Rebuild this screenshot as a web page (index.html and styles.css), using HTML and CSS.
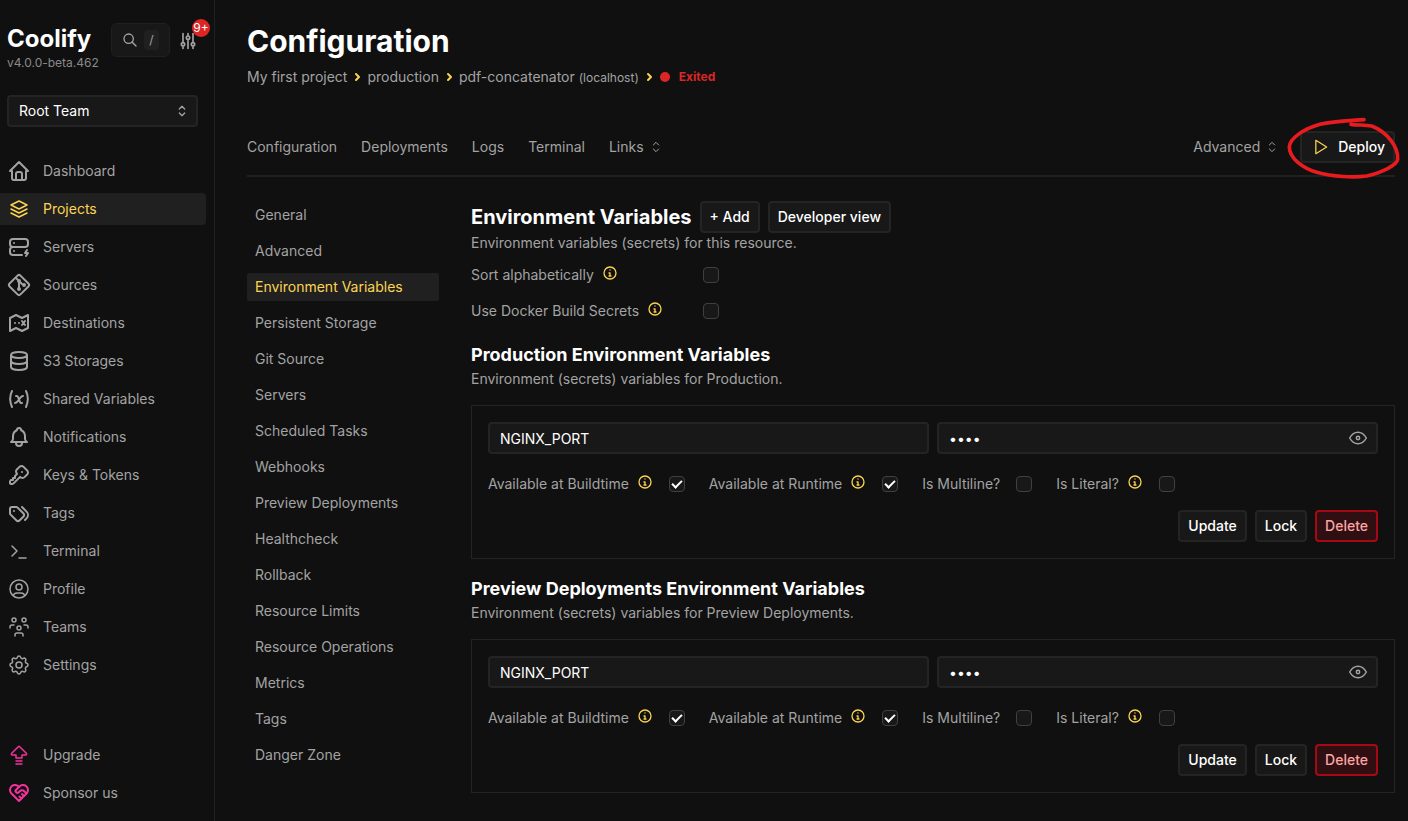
FILE: index.html
```html
<!DOCTYPE html>
<html lang="en">
<head>
  <meta charset="utf-8" />
  <meta name="viewport" content="width=device-width, initial-scale=1" />
  <title>Configuration | Coolify</title>
  <link rel="stylesheet" href="styles.css">
</head>
<body>
  <!-- shared icons -->
  <svg class="sprite" aria-hidden="true">
    <symbol id="updown" viewBox="0 0 24 24"><path d="M8 9l4-4l4 4M16 15l-4 4l-4-4"/></symbol>
    <symbol id="chevron" viewBox="0 0 12 12"><path d="M5 3l3 3l-3 3"/></symbol>
    <symbol id="info" viewBox="0 0 16 16"><circle cx="8" cy="8" r="6"/><path d="M7 8h1v3M7 11h2"/><path d="M8 5v.1"/></symbol>
    <symbol id="eye" viewBox="0 0 24 24"><circle cx="12" cy="12" r="2"/><path d="M22 12c-2.667 4.667-6 7-10 7s-7.333-2.333-10-7c2.667-4.667 6-7 10-7s7.333 2.333 10 7"/></symbol>
  </svg>

  <aside class="sidebar">
    <div class="brand-row">
      <div class="brand">
        <a href="#" class="brand-name">Coolify</a>
        <span class="version">v4.0.0-beta.462</span>
      </div>
      <button class="search" type="button" aria-label="Search">
        <svg class="icon search-icon" viewBox="0 0 24 24"><circle cx="10" cy="10" r="7"/><path d="M21 21l-6-6"/></svg>
        <kbd>/</kbd>
      </button>
      <button class="tuner" type="button" aria-label="What's new">
        <svg class="icon tuner-icon" viewBox="0 0 24 24"><path d="M4 16a2 2 0 1 0 4 0a2 2 0 1 0-4 0M6 3v11M6 18v3M10 8a2 2 0 1 0 4 0a2 2 0 1 0-4 0M12 3v3M12 10v11M16 16a2 2 0 1 0 4 0a2 2 0 1 0-4 0M18 3v11M18 18v3"/></svg>
        <span class="badge">9+</span>
      </button>
    </div>

    <div class="team">
      <select aria-label="Team">
        <option>Root Team</option>
      </select>
      <svg class="icon team-arrow"><use href="#updown"/></svg>
    </div>

    <nav class="menu">
      <a href="#" class="menu-item"><svg class="icon" viewBox="0 0 24 24"><path d="M5 12H3l9-9l9 9h-2M5 12v7a2 2 0 0 0 2 2h10a2 2 0 0 0 2-2v-7M9 21v-6a2 2 0 0 1 2-2h2a2 2 0 0 1 2 2v6"/></svg>Dashboard</a>
      <a href="#" class="menu-item active"><svg class="icon thin" viewBox="0 0 24 24"><path d="M12 4l-8 4l8 4l8-4zM4 12l8 4l8-4M4 16l8 4l8-4"/></svg>Projects</a>
      <a href="#" class="menu-item"><svg class="icon" viewBox="0 0 24 24"><path d="M3 7a3 3 0 0 1 3-3h12a3 3 0 0 1 3 3v2a3 3 0 0 1-3 3H6a3 3 0 0 1-3-3zM15 20H6a3 3 0 0 1-3-3v-2a3 3 0 0 1 3-3h12M7 8v.01M7 16v.01M20 15l-2 3h3l-2 3"/></svg>Servers</a>
      <a href="#" class="menu-item"><svg class="icon" viewBox="0 0 24 24"><path d="M16 12a1 1 0 1 0 2 0a1 1 0 1 0-2 0M11 8a1 1 0 1 0 2 0a1 1 0 1 0-2 0M11 16a1 1 0 1 0 2 0a1 1 0 1 0-2 0M12 15V9M15 11l-2-2M11 7L9.1 5.1"/><path d="M13.446 2.6l7.955 7.954a2.045 2.045 0 0 1 0 2.892l-7.955 7.955a2.045 2.045 0 0 1-2.892 0l-7.955-7.955a2.045 2.045 0 0 1 0-2.892l7.955-7.955a2.045 2.045 0 0 1 2.892 0z"/></svg>Sources</a>
      <a href="#" class="menu-item"><svg class="icon" viewBox="0 0 24 24"><path d="M3 7l6-3l6 3l6-3v13l-6 3l-6-3l-6 3zM8 12v.01M12 12v.01M15 10l3 4M18 10l-3 4"/></svg>Destinations</a>
      <a href="#" class="menu-item"><svg class="icon" viewBox="0 0 24 24"><path d="M4 6a8 3 0 1 0 16 0a8 3 0 1 0-16 0M4 6v6a8 3 0 0 0 16 0V6M4 12v6a8 3 0 0 0 16 0v-6"/></svg>S3 Storages</a>
      <a href="#" class="menu-item"><svg class="icon" viewBox="0 0 24 24"><path d="M5 4C2.5 9 2.5 14 5 20M19 4c2.500 5 2.500 10 0 16M9 9h1c1 0 1 1 2.016 3.527C13 15 13 16 14 16h1M8 16c1.500 0 3-2 4-3.500S14.500 9 16 9"/></svg>Shared Variables</a>
      <a href="#" class="menu-item"><svg class="icon" viewBox="0 0 24 24"><path d="M10 5a2 2 0 1 1 4 0a7 7 0 0 1 4 6v3a4 4 0 0 0 2 3H4a4 4 0 0 0 2-3v-3a7 7 0 0 1 4-6M9 17v1a3 3 0 0 0 6 0v-1"/></svg>Notifications</a>
      <a href="#" class="menu-item"><svg class="icon" viewBox="0 0 24 24"><path d="M16.555 3.843l3.602 3.602a2.877 2.877 0 0 1 0 4.069l-2.643 2.643a2.877 2.877 0 0 1-4.069 0l-.301-.301l-6.558 6.558a2 2 0 0 1-1.239.578L5.172 21H4a1 1 0 0 1-.993-.883L3 20v-1.172a2 2 0 0 1 .467-1.284l.119-.13L4 17h2v-2h2v-2l2.144-2.144l-.301-.301a2.877 2.877 0 0 1 0-4.069l2.643-2.643a2.877 2.877 0 0 1 4.069 0M15 9h.01"/></svg>Keys &amp; Tokens</a>
      <a href="#" class="menu-item"><svg class="icon" viewBox="0 0 24 24"><path d="M3 8v4.172a2 2 0 0 0 .586 1.414l5.710 5.710a2.410 2.410 0 0 0 3.408 0l3.592-3.592a2.410 2.410 0 0 0 0-3.408l-5.710-5.710A2 2 0 0 0 9.172 6H5a2 2 0 0 0-2 2M18 19l1.592-1.592a4.820 4.820 0 0 0 0-6.816L15 6M7 10h-.01"/></svg>Tags</a>
      <a href="#" class="menu-item"><svg class="icon thin" viewBox="0 0 24 24"><path d="M5 7l5 5l-5 5M12 19h7"/></svg>Terminal</a>
      <a href="#" class="menu-item"><svg class="icon thin" viewBox="0 0 24 24"><path d="M3 12a9 9 0 1 0 18 0a9 9 0 1 0-18 0M9 10a3 3 0 1 0 6 0a3 3 0 1 0-6 0M6.168 18.849A4 4 0 0 1 10 16h4a4 4 0 0 1 3.834 2.855"/></svg>Profile</a>
      <a href="#" class="menu-item"><svg class="icon thin" viewBox="0 0 24 24"><path d="M10 13a2 2 0 1 0 4 0a2 2 0 0 0-4 0M8 21v-1a2 2 0 0 1 2-2h4a2 2 0 0 1 2 2v1M15 5a2 2 0 1 0 4 0a2 2 0 0 0-4 0M17 10h2a2 2 0 0 1 2 2v1M5 5a2 2 0 1 0 4 0a2 2 0 0 0-4 0M3 13v-1a2 2 0 0 1 2-2h2"/></svg>Teams</a>
      <a href="#" class="menu-item"><svg class="icon thin" viewBox="0 0 24 24"><path d="M10.325 4.317c.426-1.756 2.924-1.756 3.350 0a1.724 1.724 0 0 0 2.573 1.066c1.543-.94 3.310.826 2.370 2.370a1.724 1.724 0 0 0 1.065 2.572c1.756.426 1.756 2.924 0 3.350a1.724 1.724 0 0 0-1.066 2.573c.94 1.543-.826 3.310-2.370 2.370a1.724 1.724 0 0 0-2.572 1.065c-.426 1.756-2.924 1.756-3.350 0a1.724 1.724 0 0 0-2.573-1.066c-1.543.94-3.310-.826-2.370-2.370a1.724 1.724 0 0 0-1.065-2.572c-1.756-.426-1.756-2.924 0-3.350a1.724 1.724 0 0 0 1.066-2.573c-.94-1.543.826-3.310 2.370-2.370c1 .608 2.296.07 2.572-1.065"/><circle cx="12" cy="12" r="3"/></svg>Settings</a>
    </nav>

    <div class="menu menu-bottom">
      <a href="#" class="menu-item"><svg class="icon pink thin" viewBox="0 0 24 24"><path d="M9 12H5.414a1 1 0 0 1-.707-1.707l6.586-6.586a1 1 0 0 1 1.414 0l6.586 6.586A1 1 0 0 1 18.586 12H15v3H9zM9 21h6M9 18h6"/></svg>Upgrade</a>
      <a href="#" class="menu-item"><svg class="icon pink" viewBox="0 0 24 24"><path d="M19.500 12.572L12 20l-7.500-7.428A5 5 0 1 1 12 6.006a5 5 0 1 1 7.500 6.572"/><path d="M12 6L8.707 9.293a1 1 0 0 0 0 1.414l.543.543c.69.69 1.810.69 2.500 0l1-1a3.182 3.182 0 0 1 4.500 0l2.250 2.250M12.500 15.500l2 2M15 13l2 2"/></svg>Sponsor us</a>
    </div>
  </aside>

  <main class="main">
    <h1>Configuration</h1>
    <div class="breadcrumb">
      <a href="#">My first project</a>
      <svg class="icon crumb"><use href="#chevron"/></svg>
      <a href="#">production</a>
      <svg class="icon crumb"><use href="#chevron"/></svg>
      <a href="#">pdf-concatenator <small>(localhost)</small></a>
      <svg class="icon crumb"><use href="#chevron"/></svg>
      <span class="status"><span class="dot"></span>Exited</span>
    </div>

    <div class="tabs">
      <nav class="tab-links">
        <a href="#">Configuration</a>
        <a href="#">Deployments</a>
        <a href="#">Logs</a>
        <a href="#">Terminal</a>
        <button class="dropdown" type="button">Links <svg class="icon arrows"><use href="#updown"/></svg></button>
      </nav>
      <div class="tab-actions">
        <button class="dropdown" type="button">Advanced <svg class="icon arrows"><use href="#updown"/></svg></button>
        <div class="deploy">
          <button class="btn" type="button"><svg class="icon play" viewBox="0 0 24 24"><path d="M7 4v16l13-8z"/></svg>Deploy</button>
          <svg class="circle-mark" viewBox="342 45 360 210" aria-hidden="true"><path d="M582 59C530 63 490 64 450 73C400 87 360 115 358 140C357 175 400 205 440 217C490 231 550 233 590 228C640 216 680 195 683 178C686 140 650 95 605 78C585 74 560 76 543 73"/></svg>
        </div>
      </div>
    </div>

    <div class="layout">
      <nav class="submenu">
        <a href="#">General</a>
        <a href="#">Advanced</a>
        <a href="#" class="active">Environment Variables</a>
        <a href="#">Persistent Storage</a>
        <a href="#">Git Source</a>
        <a href="#">Servers</a>
        <a href="#">Scheduled Tasks</a>
        <a href="#">Webhooks</a>
        <a href="#">Preview Deployments</a>
        <a href="#">Healthcheck</a>
        <a href="#">Rollback</a>
        <a href="#">Resource Limits</a>
        <a href="#">Resource Operations</a>
        <a href="#">Metrics</a>
        <a href="#">Tags</a>
        <a href="#">Danger Zone</a>
      </nav>

      <section class="content">
        <div class="title-row">
          <h2>Environment Variables</h2>
          <button class="btn" type="button">+ Add</button>
          <button class="btn" type="button">Developer view</button>
        </div>
        <p>Environment variables (secrets) for this resource.</p>

        <div class="options">
          <div class="check">
            <label for="sort">Sort alphabetically <svg class="icon info"><use href="#info"/></svg></label>
            <input type="checkbox" id="sort">
          </div>
          <div class="check">
            <label for="secrets">Use Docker Build Secrets <svg class="icon info"><use href="#info"/></svg></label>
            <input type="checkbox" id="secrets">
          </div>
        </div>

        <h3>Production Environment Variables</h3>
        <p>Environment (secrets) variables for Production.</p>
        <form class="card">
          <div class="fields">
            <input type="text" aria-label="Name" value="NGINX_PORT">
            <div class="secret">
              <input type="password" aria-label="Value" value="8080">
              <button type="button" aria-label="Show value"><svg class="icon eye"><use href="#eye"/></svg></button>
            </div>
          </div>
          <div class="checks">
            <div class="check">
              <label for="prod-build">Available at Buildtime <svg class="icon info"><use href="#info"/></svg></label>
              <input type="checkbox" id="prod-build" checked>
            </div>
            <div class="check">
              <label for="prod-run">Available at Runtime <svg class="icon info"><use href="#info"/></svg></label>
              <input type="checkbox" id="prod-run" checked>
            </div>
            <div class="check">
              <label for="prod-multi">Is Multiline?</label>
              <input type="checkbox" id="prod-multi">
            </div>
            <div class="check">
              <label for="prod-literal">Is Literal? <svg class="icon info"><use href="#info"/></svg></label>
              <input type="checkbox" id="prod-literal">
            </div>
          </div>
          <div class="actions">
            <button class="btn" type="button">Update</button>
            <button class="btn" type="button">Lock</button>
            <button class="btn danger" type="button">Delete</button>
          </div>
        </form>

        <h3>Preview Deployments Environment Variables</h3>
        <p>Environment (secrets) variables for Preview Deployments.</p>
        <form class="card">
          <div class="fields">
            <input type="text" aria-label="Name" value="NGINX_PORT">
            <div class="secret">
              <input type="password" aria-label="Value" value="8080">
              <button type="button" aria-label="Show value"><svg class="icon eye"><use href="#eye"/></svg></button>
            </div>
          </div>
          <div class="checks">
            <div class="check">
              <label for="prev-build">Available at Buildtime <svg class="icon info"><use href="#info"/></svg></label>
              <input type="checkbox" id="prev-build" checked>
            </div>
            <div class="check">
              <label for="prev-run">Available at Runtime <svg class="icon info"><use href="#info"/></svg></label>
              <input type="checkbox" id="prev-run" checked>
            </div>
            <div class="check">
              <label for="prev-multi">Is Multiline?</label>
              <input type="checkbox" id="prev-multi">
            </div>
            <div class="check">
              <label for="prev-literal">Is Literal? <svg class="icon info"><use href="#info"/></svg></label>
              <input type="checkbox" id="prev-literal">
            </div>
          </div>
          <div class="actions">
            <button class="btn" type="button">Update</button>
            <button class="btn" type="button">Lock</button>
            <button class="btn danger" type="button">Delete</button>
          </div>
        </form>
      </section>
    </div>
  </main>
</body>
</html>
```

FILE: styles.css
```css
* {
  box-sizing: border-box;
}
body {
  margin: 0;
  display: flex;
  min-height: 100vh;
  background: #101010;
  color: #a3a3a3;
  font-family: Inter, "Liberation Sans", sans-serif;
  font-size: 14px;
  line-height: 20px;
}
a {
  color: inherit;
  text-decoration: none;
}
button,
input,
select {
  font: inherit;
  color: inherit;
}
button {
  padding: 0;
  border: 0;
  background: none;
  cursor: pointer;
}
h1,
h2,
h3,
p {
  margin: 0;
}
h1,
h2,
h3 {
  color: #fff;
  font-weight: 700;
}
h1 {
  font-size: 30px;
  line-height: 36px;
}
h2 {
  font-size: 20px;
  line-height: 32px;
}
h3 {
  font-size: 18px;
  line-height: 28px;
}

/* icons */
.sprite {
  display: none;
}
.icon {
  width: 24px;
  height: 24px;
  flex: none;
  fill: none;
  stroke: currentColor;
  stroke-width: 2;
  stroke-linecap: round;
  stroke-linejoin: round;
}
.icon.thin {
  stroke-width: 1.5;
}
.pink {
  color: #f4319c;
}

/* sidebar */
.sidebar {
  display: flex;
  flex-direction: column;
  width: 215px;
  flex: none;
  padding: 23px 8px 12px 0;
  border-right: 1px solid #202020;
}
.brand-row {
  display: flex;
  align-items: flex-start;
  padding-left: 7px;
}
.brand {
  display: flex;
  flex-direction: column;
  width: 104px;
}
.brand-name {
  color: #fff;
  font-size: 24px;
  font-weight: 700;
  line-height: 32px;
}
.version {
  font-size: 12px;
  line-height: 16px;
  color: #8a8a8a;
}
.search {
  display: flex;
  align-items: center;
  gap: 6px;
  height: 34px;
  padding: 0 10px;
  border: 1px solid #202020;
  border-radius: 6px;
  background: #181818;
}
.search-icon {
  width: 16px;
  height: 16px;
}
.search kbd {
  width: 15px;
  border-radius: 4px;
  background: #202020;
  font-family: inherit;
  font-size: 12px;
}
.tuner {
  position: relative;
  display: flex;
  margin: 8px 0 0 8px;
}
.tuner-icon {
  width: 20px;
  height: 20px;
}
.badge {
  position: absolute;
  top: -12px;
  left: 14px;
  width: 18px;
  height: 18px;
  border-radius: 50%;
  background: #dc2626;
  color: #fff;
  font-size: 12px;
  line-height: 18px;
}
.team {
  position: relative;
  margin: 24px 8px 28px 7px;
}
.team select {
  width: 100%;
  height: 32px;
  padding: 0 10px;
  appearance: none;
  border: 2px solid #242424;
  border-radius: 4px;
  background: #181818;
  color: #fff;
}
.team-arrow {
  position: absolute;
  top: 8px;
  right: 8px;
  width: 16px;
  height: 16px;
  pointer-events: none;
}
.menu {
  display: flex;
  flex-direction: column;
  gap: 6px;
}
.menu-bottom {
  margin-top: auto;
}
.menu-item {
  display: flex;
  align-items: center;
  gap: 12px;
  height: 32px;
  padding-left: 7px;
  border-radius: 0 4px 4px 0;
}
.menu-item.active {
  background: #202020;
  color: #fcd452;
}

/* page header */
.main {
  flex: 1;
  min-width: 0;
  padding: 23px 13px 28px 32px;
}
.breadcrumb {
  display: flex;
  align-items: center;
  gap: 4px;
  height: 20px;
  margin-top: 8px;
}
.breadcrumb small {
  font-size: 12px;
  line-height: 16px;
}
.crumb {
  width: 12px;
  height: 12px;
  color: #fcd452;
}
.status {
  display: flex;
  align-items: center;
  gap: 9px;
  padding-left: 1px;
  color: #dc2626;
  font-size: 12px;
  font-weight: 700;
}
.dot {
  width: 10px;
  height: 10px;
  border-radius: 50%;
  background: #dc2626;
}
.tabs {
  display: flex;
  justify-content: space-between;
  margin-top: 44px;
  padding-bottom: 12px;
  border-bottom: 2px solid #202020;
}
.tab-links,
.tab-actions {
  display: flex;
  align-items: center;
  gap: 24px;
}
.dropdown {
  display: flex;
  align-items: center;
  gap: 4px;
}
.arrows {
  width: 16px;
  height: 16px;
  stroke-width: 1.5;
}
.tab-actions {
  gap: 20px;
}
.btn {
  display: flex;
  align-items: center;
  gap: 8px;
  height: 32px;
  padding: 0 8px;
  border: 2px solid #242424;
  border-radius: 4px;
  background: #181818;
  color: #fff;
  font-weight: 500;
}
.danger {
  border-color: #a50a14;
  background: #300f12;
  color: #fca5a5;
}
.play {
  width: 20px;
  height: 20px;
  stroke-width: 1.5;
  color: #fcd452;
}
/* hand drawn ring over the deploy button */
.deploy {
  position: relative;
}
.circle-mark {
  position: absolute;
  top: -16px;
  right: -9px;
  width: 120px;
  height: 70px;
  fill: none;
  stroke: #e81c1f;
  stroke-width: 11;
  stroke-linecap: round;
  pointer-events: none;
}

/* configuration body */
.layout {
  display: flex;
  gap: 32px;
  margin-top: 24px;
}
.submenu {
  display: flex;
  flex-direction: column;
  gap: 8px;
  width: 192px;
  flex: none;
}
.submenu a {
  padding: 4px 8px;
  border-radius: 2px;
}
.submenu .active {
  background: #202020;
  color: #fcd452;
}
.content {
  flex: 1;
  min-width: 0;
}
.title-row {
  display: flex;
  gap: 8px;
}
.options {
  width: 248px;
  margin: 4px 0 12px;
}
.check {
  display: flex;
  align-items: center;
  justify-content: space-between;
  gap: 16px;
  height: 36px;
}
.check label {
  display: flex;
  align-items: center;
  gap: 8px;
}
.info {
  width: 16px;
  height: 16px;
  margin-bottom: 4px;
  color: #fcd452;
  stroke-width: 1.3;
}
.check input {
  display: flex;
  align-items: center;
  justify-content: center;
  width: 16px;
  height: 16px;
  margin: 0;
  appearance: none;
  border: 1px solid #404040;
  border-radius: 4px;
  background: #181818;
}
.check input:checked::after {
  content: "";
  width: 4px;
  height: 8px;
  margin-bottom: 2px;
  border: solid #fff;
  border-width: 0 2px 2px 0;
  transform: rotate(45deg);
}
.card {
  margin: 16px 0;
  padding: 16px;
  border: 1px solid #242424;
}
.card:last-child {
  margin-bottom: 0;
}
.fields {
  display: grid;
  grid-template-columns: 1fr 1fr;
  gap: 8px;
  margin-bottom: 12px;
}
.fields input {
  width: 100%;
  height: 32px;
  padding: 0 10px;
  border: 2px solid #242424;
  border-radius: 4px;
  background: #181818;
  color: #fff;
}
.secret {
  position: relative;
}
.secret button {
  position: absolute;
  top: 6px;
  right: 10px;
  display: flex;
}
.eye {
  width: 20px;
  height: 20px;
  stroke-width: 1.8;
}
.checks {
  display: flex;
  gap: 24px;
}
.actions {
  display: flex;
  justify-content: flex-end;
  gap: 8px;
  margin-top: 8px;
}
```
